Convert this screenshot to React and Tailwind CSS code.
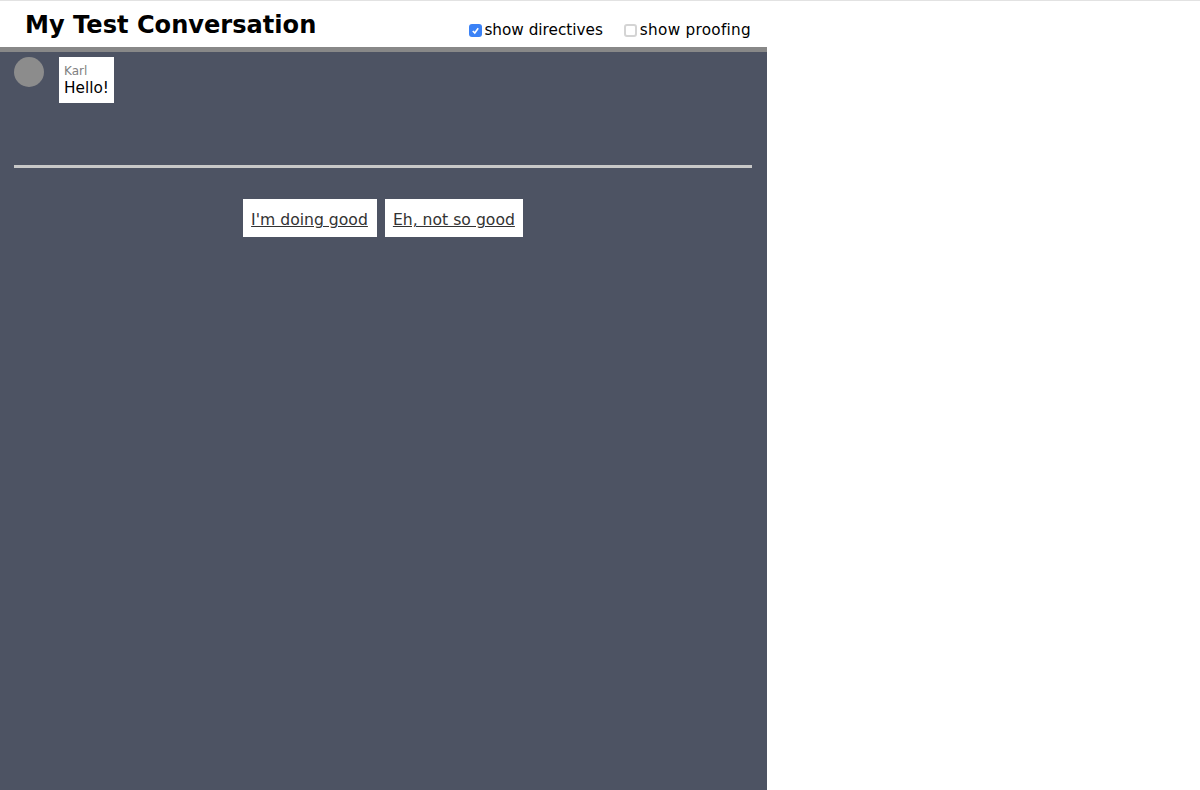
import React from "react";

const font = { fontFamily: "'DejaVu Sans', sans-serif" };

function Toggle({ label, checked, className, labelClass }) {
  return (
    <label className={"flex items-center " + className}>
      {checked ? (
        <span className="w-[13px] h-[13px] rounded-[3px] bg-[#3b82f6] flex items-center justify-center mt-[2px]">
          <svg width="9" height="9" viewBox="0 0 10 10" fill="none">
            <path d="M2 5.5 L4.2 7.8 L8 2.5" stroke="white" strokeWidth="1.8" />
          </svg>
        </span>
      ) : (
        <span className="w-[13px] h-[13px] rounded-[3px] bg-white border-2 border-[#d4d4d4] mt-[2px]"></span>
      )}
      <span className={"text-[15.25px] leading-[20px] pt-[2px] text-black " + labelClass}>{label}</span>
    </label>
  );
}

function ReplyButton({ text, className }) {
  return (
    <a className={"bg-white pl-[8px] h-[38px] pt-[4px] flex items-center text-[15.65px] text-[#333] underline " + className}>
      {text}
    </a>
  );
}

export default function App() {
  return (
    <div className="h-[790px] overflow-hidden bg-white border-t border-[#e2e2e2]" style={font}>
      <div className="w-[767px] h-[789px] flex flex-col">
        <div className="h-[46px] flex justify-between shrink-0">
          <h1 className="ml-[25px] mt-[8px] text-[24.1px] leading-[32px] font-bold text-black">
            My Test Conversation
          </h1>
          <div className="flex mt-[18px] h-[20px] mr-[16px]">
            <Toggle label="show directives" checked labelClass="ml-[2px]" />
            <Toggle label="show proofing" className="ml-[21px]" labelClass="ml-[3px] tracking-[0.28px]" />
          </div>
        </div>
        <div className="flex-1 bg-[#4d5363] border-t-[5px] border-[#888888] px-[14px] pt-[5px]">
          <div className="h-[108px] flex items-start">
            <div className="w-[30px] h-[30px] rounded-full bg-[#8c8c8c]"></div>
            <div className="ml-[15px] bg-white w-[55px] h-[46px] px-[5px] pt-[7px]">
              <div className="text-[12px] leading-[14px] text-[#808080]">Karl</div>
              <div className="text-[15.3px] leading-[20px] text-black">Hello!</div>
            </div>
          </div>
          <div className="h-[3px] bg-[#c8c8c8] w-[738px]"></div>
          <div className="flex justify-center gap-[8px] mt-[31px] w-[738px]">
            <ReplyButton text="I'm doing good" className="pr-[9px]" />
            <ReplyButton text="Eh, not so good" className="pr-[8px]" />
          </div>
        </div>
      </div>
    </div>
  );
}
